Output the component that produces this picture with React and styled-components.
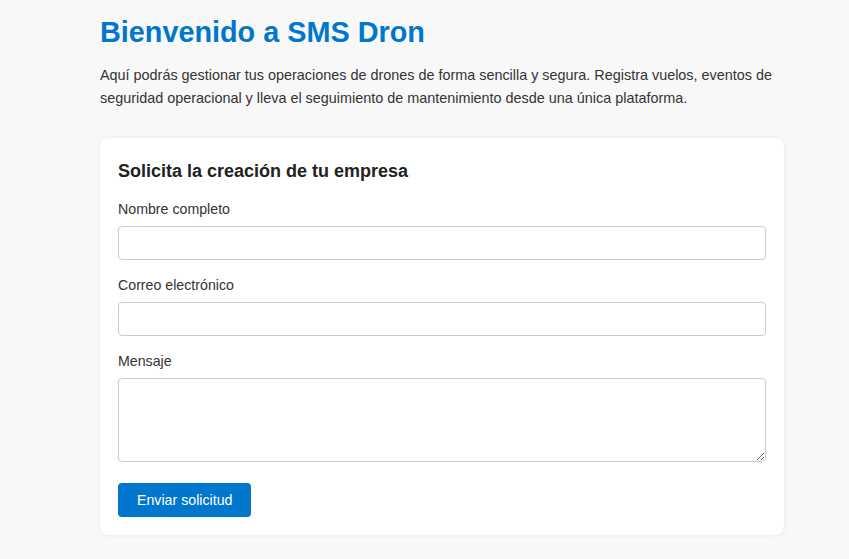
import React from "react";
import styled, { createGlobalStyle } from "styled-components";

const GlobalStyle = createGlobalStyle`
  html, body {
    margin: 0;
    padding: 0;
    background: #f8f8f8;
    font-family: "Liberation Sans", Arial, sans-serif;
    color: #333;
  }
`;

export default function App() {
  return (
    <>
      <GlobalStyle />
      <Wrapper>
        <Title>Bienvenido a SMS Dron</Title>
        <Intro>
          Aquí podrás gestionar tus operaciones de drones de forma sencilla y
          segura. Registra vuelos, eventos de seguridad operacional y lleva el
          seguimiento de mantenimiento desde una única plataforma.
        </Intro>
        <Card>
          <CardTitle>Solicita la creación de tu empresa</CardTitle>
          <form onSubmit={(e) => e.preventDefault()}>
            <Field>
              <Label htmlFor="nombre">Nombre completo</Label>
              <Input id="nombre" type="text" />
            </Field>
            <Field>
              <Label htmlFor="correo">Correo electrónico</Label>
              <Input id="correo" type="email" />
            </Field>
            <Field>
              <Label htmlFor="mensaje">Mensaje</Label>
              <TextArea id="mensaje" />
            </Field>
            <Button type="submit">Enviar solicitud</Button>
          </form>
        </Card>
      </Wrapper>
    </>
  );
}

const Wrapper = styled.div`
  width: 684px;
  padding: 16px 0 24px 100px;
`;

const Title = styled.h1`
  margin: 0;
  font-size: 28.8px;
  line-height: 32px;
  font-weight: bold;
  color: #0077cc;
`;

const Intro = styled.p`
  margin: 16px 0 28px;
  font-size: 14.4px;
  line-height: 23px;
  color: #333;
`;

const Card = styled.div`
  background: #fff;
  border-radius: 8px;
  box-shadow: 0 0 4px rgba(0, 0, 0, 0.08);
  padding: 22px 18px 18px;
`;

const CardTitle = styled.h2`
  margin: 0 0 18px;
  font-size: 18px;
  line-height: 22px;
  font-weight: bold;
  color: #222;
`;

const Field = styled.div`
  margin-bottom: 16px;
`;

const Label = styled.label`
  display: block;
  font-size: 14.2px;
  line-height: 18px;
  margin-bottom: 8px;
  color: #333;
`;

const Input = styled.input`
  display: block;
  box-sizing: border-box;
  width: 100%;
  height: 34px;
  border: 1px solid #ccc;
  border-radius: 4px;
  padding: 6px 8px;
  font-family: inherit;
  font-size: 14px;
`;

const TextArea = styled.textarea`
  display: block;
  box-sizing: border-box;
  width: 100%;
  height: 84px;
  border: 1px solid #ccc;
  border-radius: 4px;
  padding: 6px 8px;
  font-family: inherit;
  font-size: 14px;
  resize: vertical;
`;

const Button = styled.button`
  margin-top: 5px;
  height: 34px;
  padding: 0 19px;
  border: none;
  border-radius: 4px;
  background: #0077cc;
  color: #fff;
  font-family: inherit;
  font-size: 14.2px;
  cursor: pointer;
`;
